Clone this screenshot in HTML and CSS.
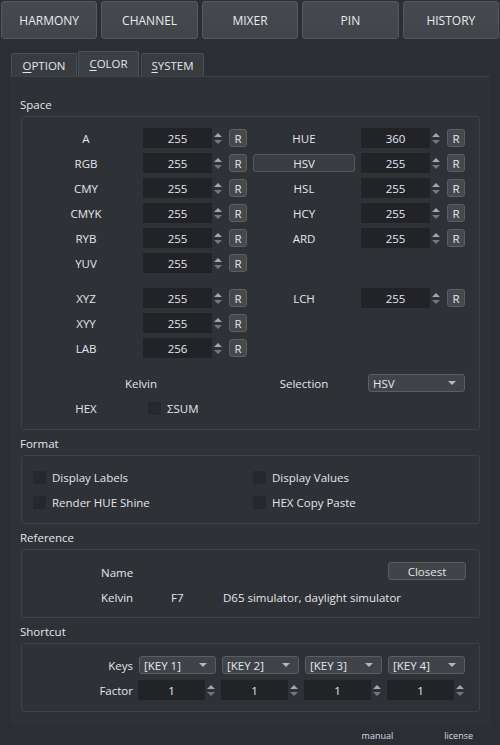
FILE: index.html
```html
<!DOCTYPE html>
<html>
<head>
<meta charset="utf-8">
<link rel="stylesheet" href="styles.css">
</head>
<body>
<div class="topbar">
  <div class="tbtn">HARMONY</div>
  <div class="tbtn">CHANNEL</div>
  <div class="tbtn">MIXER</div>
  <div class="tbtn">PIN</div>
  <div class="tbtn">HISTORY</div>
</div>
<div class="tabs">
  <div class="tab t-option"><u>O</u>PTION</div>
  <div class="tab t-color active"><u>C</u>OLOR</div>
  <div class="tab t-system"><u>S</u>YSTEM</div>
</div>
<div class="panel">
  <div class="gtitle first">Space</div>
  <div class="gbox space">
    <div class="sgrid">
      <div class="lbl">A</div>
      <div class="spin"><div class="num">255</div><div class="arrows"><i class="up"></i><i class="dn"></i></div></div>
      <div class="rbtn">R</div>
      <div class="lbl">HUE</div>
      <div class="spin"><div class="num">360</div><div class="arrows"><i class="up"></i><i class="dn"></i></div></div>
      <div class="rbtn">R</div>

      <div class="lbl">RGB</div>
      <div class="spin"><div class="num">255</div><div class="arrows"><i class="up"></i><i class="dn"></i></div></div>
      <div class="rbtn">R</div>
      <div class="lbl"><div class="hsvbtn">HSV</div></div>
      <div class="spin"><div class="num">255</div><div class="arrows"><i class="up"></i><i class="dn"></i></div></div>
      <div class="rbtn">R</div>

      <div class="lbl">CMY</div>
      <div class="spin"><div class="num">255</div><div class="arrows"><i class="up"></i><i class="dn"></i></div></div>
      <div class="rbtn">R</div>
      <div class="lbl">HSL</div>
      <div class="spin"><div class="num">255</div><div class="arrows"><i class="up"></i><i class="dn"></i></div></div>
      <div class="rbtn">R</div>

      <div class="lbl">CMYK</div>
      <div class="spin"><div class="num">255</div><div class="arrows"><i class="up"></i><i class="dn"></i></div></div>
      <div class="rbtn">R</div>
      <div class="lbl">HCY</div>
      <div class="spin"><div class="num">255</div><div class="arrows"><i class="up"></i><i class="dn"></i></div></div>
      <div class="rbtn">R</div>

      <div class="lbl">RYB</div>
      <div class="spin"><div class="num">255</div><div class="arrows"><i class="up"></i><i class="dn"></i></div></div>
      <div class="rbtn">R</div>
      <div class="lbl">ARD</div>
      <div class="spin"><div class="num">255</div><div class="arrows"><i class="up"></i><i class="dn"></i></div></div>
      <div class="rbtn">R</div>

      <div class="lbl">YUV</div>
      <div class="spin"><div class="num">255</div><div class="arrows"><i class="up"></i><i class="dn"></i></div></div>
      <div class="rbtn">R</div>
      <div class="empty3"></div>

      <div class="spacer"></div>

      <div class="lbl">XYZ</div>
      <div class="spin"><div class="num">255</div><div class="arrows"><i class="up"></i><i class="dn"></i></div></div>
      <div class="rbtn">R</div>
      <div class="lbl">LCH</div>
      <div class="spin"><div class="num">255</div><div class="arrows"><i class="up"></i><i class="dn"></i></div></div>
      <div class="rbtn">R</div>

      <div class="lbl">XYY</div>
      <div class="spin"><div class="num">255</div><div class="arrows"><i class="up"></i><i class="dn"></i></div></div>
      <div class="rbtn">R</div>
      <div class="empty3"></div>

      <div class="lbl">LAB</div>
      <div class="spin"><div class="num">256</div><div class="arrows"><i class="up"></i><i class="dn"></i></div></div>
      <div class="rbtn">R</div>
      <div class="empty3"></div>
    </div>
    <div class="bgrid">
      <div class="kelvin">Kelvin</div>
      <div class="lbl">Selection</div>
      <div class="combo selcombo"><span>HSV</span><i class="caret"></i></div>

      <div class="lbl">HEX</div>
      <div class="sumcell"><span class="chk"></span><span>ΣSUM</span></div>
    </div>
  </div>

  <div class="gtitle">Format</div>
  <div class="gbox format">
    <label class="chkrow"><span class="chk"></span>Display Labels</label>
    <label class="chkrow"><span class="chk"></span>Display Values</label>
    <label class="chkrow"><span class="chk"></span>Render HUE Shine</label>
    <label class="chkrow"><span class="chk"></span>HEX Copy Paste</label>
  </div>

  <div class="gtitle">Reference</div>
  <div class="gbox reference">
    <div class="rcell">Name</div>
    <div class="rcell"></div>
    <div class="rcell"></div>
    <div class="closest">Closest</div>
    <div class="rcell">Kelvin</div>
    <div class="rcell">F7</div>
    <div class="rcell wide">D65 simulator, daylight simulator</div>
  </div>

  <div class="gtitle">Shortcut</div>
  <div class="gbox shortcut">
    <div class="slbl">Keys</div>
    <div class="combo"><span>[KEY 1]</span><i class="caret"></i></div>
    <div class="combo"><span>[KEY 2]</span><i class="caret"></i></div>
    <div class="combo"><span>[KEY 3]</span><i class="caret"></i></div>
    <div class="combo"><span>[KEY 4]</span><i class="caret"></i></div>
    <div class="slbl">Factor</div>
    <div class="spin small"><div class="num">1</div><div class="arrows"><i class="up"></i><i class="dn"></i></div></div>
    <div class="spin small"><div class="num">1</div><div class="arrows"><i class="up"></i><i class="dn"></i></div></div>
    <div class="spin small"><div class="num">1</div><div class="arrows"><i class="up"></i><i class="dn"></i></div></div>
    <div class="spin small"><div class="num">1</div><div class="arrows"><i class="up"></i><i class="dn"></i></div></div>
  </div>
</div>
<div class="footer">
  <span class="flink">manual</span>
  <span class="flink">license</span>
</div>
</body>
</html>
```
FILE: styles.css
```css
* { box-sizing: border-box; }
html, body {
  margin: 0;
  padding: 0;
  width: 500px;
  height: 745px;
  background: #2b2e33;
  overflow: hidden;
}
body {
  font-family: "Open Sans", "Noto Sans", sans-serif;
  font-size: 11.5px;
  color: #e4e6e9;
}

/* top buttons */
.topbar {
  display: flex;
  gap: 4px;
  padding: 1px 1px 0 1px;
}
.tbtn {
  flex: 1;
  height: 38px;
  display: flex;
  align-items: center;
  justify-content: center;
  font-size: 12px;
  color: #e8eaee;
  background: linear-gradient(#46494e, #414449);
  border: 1px solid #56595e;
  border-radius: 3px;
}

/* tabs */
.tabs {
  display: flex;
  align-items: flex-end;
  height: 25px;
  margin-top: 12px;
  padding-left: 11px;
}
.tab {
  height: 23px;
  display: flex;
  align-items: center;
  justify-content: center;
  background: #383b40;
  border: 1px solid #4a4d52;
  border-bottom: none;
  border-radius: 2px 2px 0 0;
  color: #e4e6e9;
  font-size: 11.5px;
}
.tab u { text-decoration: underline; text-underline-offset: 2px; }
.t-option { width: 66px; }
.t-color { width: 61px; margin-left: 1px; }
.t-system { width: 63px; margin-left: 2px; }
.tab.active {
  height: 25px;
  background: #3c3f44;
  border-color: #4e5156;
  padding-bottom: 2px;
}

/* panel */
.panel {
  margin: 0 10px;
  height: 649px;
  background: #2e3136;
  border-top: 1px solid #3e4146;
  padding: 0 10px 0 11px;
}
.gtitle {
  line-height: 16px;
  height: 16px;
  margin-top: 6px;
  margin-left: -1px;
  color: #e4e6e9;
}
.gtitle.first { margin-top: 20px; }
.gbox {
  margin-top: 3px;
  border: 1px solid #3d4045;
  border-radius: 3px;
}

/* space */
.space {
  height: 314px;
  padding: 11px 0 0 13px;
}
.sgrid, .bgrid {
  display: grid;
  grid-template-columns: 102px 80px 18px 102px 80px 18px;
  column-gap: 6px;
}
.sgrid {
  grid-template-rows: repeat(6, 20px) 5px repeat(3, 20px);
  row-gap: 5px;
}
.bgrid {
  grid-template-rows: 18px 20px;
  row-gap: 6px;
  margin-top: 16px;
}
.spacer { grid-column: 1 / -1; }
.empty3 { grid-column: span 3; }
.lbl {
  display: flex;
  align-items: center;
  justify-content: center;
}
.hsvbtn {
  width: 102px;
  height: 18px;
  display: flex;
  align-items: center;
  justify-content: center;
  background: #393c41;
  border: 1px solid #55585d;
  border-radius: 3px;
}
.spin {
  display: flex;
  height: 20px;
}
.num {
  flex: 1;
  background: #212327;
  display: flex;
  align-items: center;
  justify-content: center;
  color: #e2e8f0;
}
.arrows {
  width: 11px;
  display: flex;
  flex-direction: column;
  align-items: center;
  justify-content: center;
  gap: 3px;
}
.arrows i {
  display: block;
  width: 0;
  height: 0;
  border-left: 4px solid transparent;
  border-right: 4px solid transparent;
}
.arrows .up { border-bottom: 4px solid #a3a6ab; }
.arrows .dn { border-top: 4px solid #74777c; }
.rbtn {
  height: 18px;
  margin-top: 1px;
  display: flex;
  align-items: center;
  justify-content: center;
  background: #45484d;
  border: 1px solid #5b5e63;
  border-radius: 3px;
  color: #e6e8ec;
}
.kelvin {
  grid-column: 1 / 4;
  display: flex;
  align-items: center;
  justify-content: center;
}
.selcombo {
  grid-column: 5 / 7;
  margin-left: 7px;
}
.combo {
  height: 18px;
  display: flex;
  align-items: center;
  justify-content: space-between;
  padding: 0 8px 0 4px;
  background: #404348;
  border: 1px solid #5a5d62;
  border-radius: 3px;
  color: #e4e8f0;
}
.caret {
  display: block;
  width: 0;
  height: 0;
  border-left: 4px solid transparent;
  border-right: 4px solid transparent;
  border-top: 4px solid #b4b7bc;
}
.sumcell {
  grid-column: 2 / 5;
  display: flex;
  align-items: center;
  gap: 6px;
  padding-left: 5px;
}
.chk {
  display: inline-block;
  width: 13px;
  height: 13px;
  background: #25282c;
  flex: none;
}

/* format */
.format {
  height: 69px;
  display: grid;
  grid-template-columns: 220px 1fr;
  grid-template-rows: 20px 20px;
  row-gap: 5px;
  padding: 11px 0 0 11px;
}
.chkrow {
  display: flex;
  align-items: center;
  gap: 6px;
}

/* reference */
.reference {
  height: 69px;
  display: grid;
  grid-template-columns: 70px 52px 1fr 78px;
  grid-template-rows: 20px 20px;
  row-gap: 5px;
  padding: 12px 13px 0 79px;
}
.rcell {
  display: flex;
  align-items: center;
  white-space: nowrap;
}
.rcell.wide { grid-column: 3 / 5; }
.closest {
  height: 18px;
  margin-top: 0;
  display: flex;
  align-items: center;
  justify-content: center;
  background: #404348;
  border: 1px solid #595c61;
  border-radius: 3px;
}

/* shortcut */
.shortcut {
  height: 69px;
  display: grid;
  grid-template-columns: 111px repeat(4, 77px);
  grid-template-rows: 18px 20px;
  column-gap: 6px;
  row-gap: 6px;
  padding-top: 12px;
}
.slbl {
  display: flex;
  align-items: center;
  justify-content: flex-end;
}
.spin.small { margin-left: -1px; }

/* footer */
.footer {
  height: 20px;
  display: flex;
  align-items: center;
  justify-content: flex-end;
  gap: 51px;
  padding-right: 27px;
  font-size: 9px;
  color: #d6dceb;
}
```
